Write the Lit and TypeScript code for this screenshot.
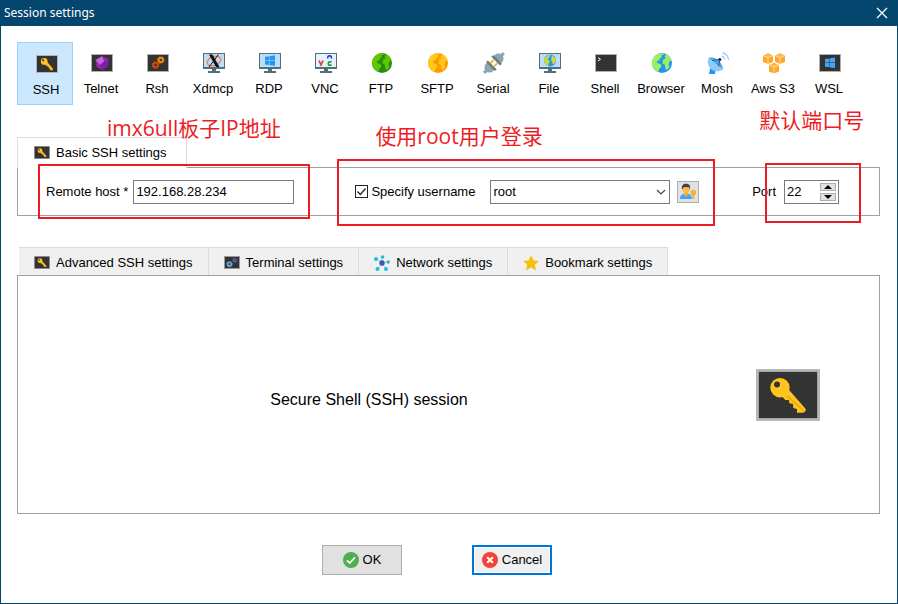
import { LitElement, html, css, svg, type TemplateResult, type SVGTemplateResult } from "lit";
import { customElement, property, state } from "lit/decorators.js";
import { classMap } from "lit/directives/class-map.js";

/* ---------- shared artwork ---------- */

const keyArt = svg`
  <path fill="#ffc41f" d="M33.3 21.3 49.7 40v2l-2.4 1.7H41V40l-3.7-1-.3-4-3.7-.7L33 31h-3.7l-3-3.3z"/>
  <path fill="none" stroke="#e2a80c" stroke-width="1.5" d="M31 27 48 42"/>
  <circle cx="24" cy="18.700" r="9.700" fill="#ffc41f"/>
  <circle cx="21" cy="15.500" r="3" fill="#333"/>`;

/* Dark console tile, 64 x 52 units */
const tile = (art: unknown) => svg`
  <rect width="64" height="52" fill="#b8b8b8"/>
  <rect x="2.500" y="2.500" width="59" height="47" fill="#8f8f8f"/>
  <rect x="3" y="3" width="58" height="46" fill="#333"/>
  ${art}`;

const smallTile = (art: unknown) => svg`
  <rect x="2" y="2" width="22" height="18" fill="#b0b0b0"/>
  <rect x="3" y="3" width="20" height="16" fill="#333"/>
  ${art}`;

const monitor = (art: unknown) => svg`
  <rect x="2" y="1" width="22" height="16" fill="#546e7a"/>
  <rect x="3" y="2" width="20" height="13" fill="#bbdefb"/>
  <path fill="#546e7a" d="M11 17h4v2h4v2H7v-2h4z"/>
  ${art}`;

const gear = (cx: number, cy: number, r: number, color: string) => svg`
  <circle cx=${cx} cy=${cy} r=${r} fill="none" stroke=${color} stroke-width=${r * 0.8}/>
  <circle cx=${cx} cy=${cy} r=${r * 1.5} fill="none" stroke=${color} stroke-width=${r * 0.5}
    stroke-dasharray="${r * 0.68} ${r * 0.5}"/>`;

const globe = (sea: string, land: string) => svg`
  <circle cx="13" cy="11" r="10" fill=${sea}/>
  <path fill=${land} d="M6 4C9 1.400 13 .8 15 1.300l-1 1.700-2 .6 1 1.600-2.500 1.300.5 1.500-2 .5-1.500 2L10 11.500l2.500 1.500-.7 2.500-1.800 1.500-.5 3C5 18 3.300 14 3.100 11 3.200 8 4 6 6 4z"/>
  <path fill=${land} d="m17 2.200 3.500 2.300L22.500 8l-2 1.500-1 3 1 2.500-2.500 3-1.500-1-.5-4-2.500-1.500.5-4 3-1.500-1.500-1.500z"/>`;

const windowsLogo = (color: string, x: number, y: number) => svg`
  <path transform="translate(${x} ${y})" fill=${color}
    d="M0 1.500 4.500 1v4H0zM5 .8 10 0v5H5zM0 5.500h4.500v4.300L0 9.300zM5 5.500h5v5L5 9.900z"/>`;

const cube = (x: number, y: number) => svg`
  <g transform="translate(${x} ${y})">
    <path fill="#ffb74d" d="m0 2.400 5-2.400 5 2.400v6.300L5 10.800 0 8.700z"/>
    <path fill="#ffa726" d="M0 3 4.700 5v5.700L0 8.700zM10 3 5.300 5v5.700L10 8.700z"/>
    <path fill="none" stroke="#fff3e0" stroke-width=".6" d="m.5 2.700 4.500 2 4.500-2M5 4.700v5.800"/>
  </g>`;

const sessionArt: Record<string, SVGTemplateResult> = {
  SSH: svg`<g transform="translate(2 2) scale(.34375 .34615)">${tile(keyArt)}</g>`,
  Telnet: smallTile(svg`
    <path fill="#9c27b0" d="m13 4.300 6.500 3-.5 6.700-5.500 4L7.500 15l-1-7z"/>
    <path fill="#c665dc" d="m13 4.300 2.200 5.200-4.200 3.500-4.500-5z"/>
    <path fill="#7b1fa2" d="m15.200 9.500 4.300-2.200-.5 6.700-5.500 4-2.500-5z"/>`),
  Rsh: smallTile(svg`${gear(10.500, 13, 2.200, "#d84a0c")}${gear(15.800, 8, 2.100, "#fb8c00")}`),
  Xdmcp: monitor(svg`
    <ellipse cx="13" cy="9" rx="7" ry="4.500" fill="none" stroke="#f0855c" stroke-width="1.500" transform="rotate(-20 13 9)"/>
    <path fill="#111" d="M8 2.500h3.500L18.500 15H15z"/>
    <path stroke="#111" stroke-width="1" d="M17.500 2.500 8 15"/>`),
  RDP: monitor(windowsLogo("#2196f3", 8, 3.300)),
  VNC: monitor(svg`
    <rect x="3" y="2" width="20" height="13" fill="#e3f2fd"/>
    <path fill="none" stroke="#e53935" stroke-width="1.700" d="m6 8.500 2 4.500 2-4.500"/>
    <path fill="none" stroke="#2020e0" stroke-width="1.400" d="M14.800 6.500V5c0-1.600 3.600-1.600 3.600 0v1.500"/>
    <path fill="none" stroke="#1fa32a" stroke-width="1.700" d="M18.500 9.800h-2.200q-1 0-1 1.700t1 1.700h2.200"/>`),
  FTP: globe("#2a8a12", "#5fc800"),
  SFTP: globe("#ff9800", "#ffc91a"),
  Serial: svg`
    <g transform="rotate(-45 13 11)">
      <path stroke="#90a4ae" stroke-width="3" d="M-1 11h5M22 11h5"/>
      <path fill="#90a4ae" d="M2 8.500 5 6h4.500v10H5l-3-2.500zM24 8.500 21 6h-4.500v10H21l3-2.500z"/>
      <path fill="#607d8b" d="M8 4.800h2.500v12.400H8zM15.500 4.800H18v12.400h-2.500z"/>
      <path stroke="#ffb300" stroke-width="1.800" d="M10.500 8.500h4.500M11 13.500h4.500"/>
    </g>`,
  File: monitor(svg`
    <circle cx="13" cy="8.600" r="6" fill="#2196f3"/>
    <path fill="#cddc39" d="M8 5.500 12 2.700l1.500.6-1.500 2-1.500 2 2.500 2-1.500 2.500-.5 2.500C8 13 7.200 10 7.100 8z"/>
    <path fill="#cddc39" d="m15 3.500 3 2 1 3-1.500 3-1.500 1-1-3-1-1.500z"/>`),
  Shell: smallTile(svg`<path fill="none" stroke="#fff" stroke-width="1" d="m5 5.500 2.500 1.800L5 9"/>`),
  Browser: globe("#2196f3", "#9cf05a"),
  Mosh: svg`
    <path fill="#2196f3" d="m5.500 14.500 5 3.500-.5 4H4z"/>
    <path fill="#90caf9" d="M3.500 6C1.500 11 4 17.500 9.500 19c3 .8 6.500 0 8.500-1.500z"/>
    <path fill="#42a5f5" d="M3.500 6 18 17.500C18 15 16 10 12 7.500 9 5.500 6 5 3.500 6z"/>
    <path fill="none" stroke="#455a64" stroke-width="1" d="m7 8.500 8-1-1.500 7"/>
    <circle cx="14.800" cy="7.500" r="1.600" fill="#1a237e"/>
    <path fill="none" stroke="#90caf9" stroke-width="1.200" d="M16.500 4c1.700.3 3 1.700 3.200 3.500M17.500.8c3.300.6 5.600 3.200 6 7"/>`,
  "Aws S3": svg`${cube(2, 1)}${cube(14, 1)}${cube(8, 10.500)}`,
  WSL: smallTile(windowsLogo("#42a5f5", 8, 5.500)),
};

const tabArt: Record<string, SVGTemplateResult> = {
  key: svg`<g transform="translate(0 1) scale(.25)">${tile(keyArt)}</g>`,
  gears: svg`
    <rect y="1" width="16" height="13" fill="#999"/><rect x="1" y="2" width="14" height="11" fill="#333"/>
    ${gear(5.500, 9.200, 1.800, "#64b5f6")}${gear(10.800, 5.200, 1.400, "#5c6bc0")}`,
  network: svg`
    <path stroke="#90caf9" stroke-width=".8" d="M8 8 2 4M8 8V2M8 8l6-1M8 8l4 6M8 8l-4 6"/>
    <circle cx="8" cy="8" r="2.700" fill="#3f51b5"/>
    <g fill="#1fbcd8"><circle cx="2" cy="4" r="2"/><circle cx="8.500" cy="2" r="1.800"/><circle cx="14.200" cy="7" r="1.800"/>
    <circle cx="12" cy="14" r="2"/><circle cx="3.500" cy="14" r="2"/></g>`,
  star: svg`<path fill="#f4c20d" d="m8 0 2.400 5.400 5.600.6-4.200 3.800L13 15.500 8 12.600l-5 2.900 1.200-5.700L0 6l5.600-.6z"/>`,
};

const tabIcon = (name: string) =>
  html`<svg class="tab-icon" viewBox="0 0 16 16" aria-hidden="true">${tabArt[name]}</svg>`;

/* ---------- session type button ---------- */

@customElement("session-type")
class SessionType extends LitElement {
  @property() label = "";
  @property({ type: Boolean }) selected = false;

  static styles = css`
    :host { display: block; flex: 0 0 56px; }
    .type {
      display: flex; flex-direction: column; align-items: center; gap: 7px;
      width: 100%; height: 63px; padding: 9px 0 0; box-sizing: border-box;
      border: 1px solid transparent; background: none;
      font: 13px/16px "Liberation Sans", sans-serif; color: #000; white-space: nowrap;
    }
    .selected { background: #cce8ff; border-color: #99d1ff; padding: 10px 0 0 2px; }
    .icon { width: 24px; height: 22px; flex: none; overflow: visible; }
  `;

  render() {
    return html`
      <button class=${classMap({ type: true, selected: this.selected })} aria-pressed=${this.selected}>
        <svg class="icon" viewBox="0 0 24 22" aria-hidden="true">${sessionArt[this.label]}</svg>
        <span>${this.label}</span>
      </button>`;
  }
}

/* ---------- settings window ---------- */

@customElement("app-root")
class AppRoot extends LitElement {
  @state() private current = "SSH";
  @state() private port = 22;

  static styles = css`
    :host {
      display: flex; flex-direction: column; min-height: 100vh; box-sizing: border-box;
      border: 1px solid #04466e; border-top: 0; background: #fff; color: #000;
      font: 13px/16px "Liberation Sans", sans-serif;
    }
    button, input, select { font: inherit; color: inherit; margin: 0; border-radius: 0; }

    .titlebar {
      display: flex; align-items: center; justify-content: space-between;
      height: 26px; padding: 0 7px 0 3px; background: #04466e; color: #fff;
    }
    .title { margin: 0; font: 12px/16px "Noto Sans", "Open Sans", sans-serif; }
    .close { display: flex; padding: 2px; border: 0; background: none; }
    .close svg { width: 12px; height: 12px; }

    .content { display: flex; flex-direction: column; flex: 1; padding: 16px 17px 28px 16px; }
    .types { display: flex; }

    .basic { margin-top: 32px; }
    .tab {
      display: flex; align-items: center; gap: 6px; box-sizing: border-box;
      border: 0; background: none; white-space: nowrap;
    }
    .tab-icon { width: 16px; height: 16px; flex: none; }
    .basic-tab {
      position: relative; width: fit-content; height: 31px; margin-bottom: -1px; padding: 0 19px 0 16px;
      border: 1px solid #dcdcdc; border-bottom: 0; background: #fff;
    }
    .basic-panel {
      display: flex; align-items: center; height: 49px; box-sizing: border-box;
      padding: 0 40px 0 28px; border: 1px solid #a0a0a0;
    }

    .field { position: relative; display: flex; align-items: center; height: 24px; }
    .user { margin-left: 61px; }
    .port { margin-left: auto; }
    .box { height: 24px; box-sizing: border-box; border: 1px solid #7a7a7a; background: #fff; outline: 0; }
    .host-input { width: 161px; margin-left: 5px; padding: 0 2px; }
    .check { position: relative; display: flex; margin-right: 3px; }
    .check input { appearance: none; width: 13px; height: 13px; border: 1px solid #222; background: #fff; }
    .check svg { position: absolute; inset: 0; width: 13px; height: 13px; pointer-events: none; }
    .combo { position: relative; display: flex; width: 180px; margin-left: 15px; }
    .combo select { appearance: none; width: 100%; padding: 0 20px 0 2px; }
    .combo svg { position: absolute; right: 4px; top: 8px; width: 10px; height: 8px; pointer-events: none; }
    .user-button {
      display: flex; align-items: center; justify-content: center; width: 22px; height: 22px;
      margin-left: 7px; padding: 0; border: 1px solid #adadad; background: #e1e1e1;
    }
    .user-button svg { width: 18px; height: 18px; flex: none; }
    .spin { display: flex; align-items: center; width: 55px; margin-left: 8px; padding-right: 2px; }
    .spin input {
      flex: 1; min-width: 0; padding: 0 2px; border: 0; background: none; outline: 0; appearance: textfield;
    }
    .spin input::-webkit-inner-spin-button { appearance: none; margin: 0; }
    .arrows { display: flex; flex-direction: column; gap: 2px; }
    .arrow {
      display: flex; align-items: center; justify-content: center; width: 16px; height: 8px;
      box-sizing: border-box; padding: 0; border: 1px solid #adadad; background: #e1e1e1;
    }
    .arrow svg { width: 8px; height: 4px; flex: none; }

    /* Red callouts laid over the fields they explain */
    .mark { position: absolute; border: 2px solid #ed1c24; pointer-events: none; }
    .mark-host { inset: -16px -16px -15px -8px; }
    .mark-user { inset: -21px -16px -22px -18px; }
    .mark-port { inset: -17px -22px -19px 13px; }
    .note {
      position: absolute; bottom: 100%; white-space: nowrap; color: #ed1c24; pointer-events: none;
      font: 21px/28px "Open Sans", "Noto Sans CJK SC", sans-serif;
    }
    .note-host { left: 61px; margin-bottom: 38px; }
    .note-user { left: 20px; margin-bottom: 30px; }
    .note-port { left: 7px; margin-bottom: 46px; }

    .tabs { display: flex; margin-top: 31px; padding-left: 2px; }
    .tabs .tab {
      height: 28px; padding: 2px 15px 0; background: #f0f0f0;
      border-top: 1px solid #dcdcdc; border-right: 1px solid #dcdcdc;
    }
    .summary {
      display: flex; align-items: center; flex: 1; min-height: 120px; box-sizing: border-box;
      padding: 0 59px 0 0; border: 1px solid #a0a0a0;
    }
    .summary-text { flex: 1; margin: 0 36px 0 0; padding-top: 10px; text-align: center; font-size: 16px; line-height: 20px; }
    .summary-icon { width: 64px; height: 52px; flex: none; }

    .actions { display: flex; justify-content: center; gap: 70px; margin-top: 31px; padding-right: 23px; }
    .action {
      display: flex; align-items: center; justify-content: center; gap: 4px; width: 80px; height: 30px;
      box-sizing: border-box; padding: 0; border: 1px solid #adadad; background: #e1e1e1;
    }
    .default { border: 2px solid #0078d7; background: #f0f0f0; box-shadow: inset 0 0 0 1px #fff; }
    .action svg { width: 16px; height: 16px; flex: none; }
  `;

  private readonly types = ["SSH", "Telnet", "Rsh", "Xdmcp", "RDP", "VNC", "FTP", "SFTP", "Serial", "File",
    "Shell", "Browser", "Mosh", "Aws S3", "WSL"];

  private readonly tabs = [
    { icon: "key", label: "Advanced SSH settings" },
    { icon: "gears", label: "Terminal settings" },
    { icon: "network", label: "Network settings" },
    { icon: "star", label: "Bookmark settings" },
  ];

  private renderHost(): TemplateResult {
    return html`
      <div class="field">
        <label for="host">Remote host *</label>
        <input id="host" class="box host-input" type="text" value="192.168.28.234" />
        <span class="mark mark-host"></span>
        <span class="note note-host">imx6ull板子IP地址</span>
      </div>`;
  }

  private renderUser(): TemplateResult {
    return html`
      <div class="field user">
        <span class="check">
          <input id="specify" type="checkbox" checked />
          <svg viewBox="0 0 13 13"><path d="m2.500 6.500 2.800 3 5.200-6" fill="none" stroke="#222" stroke-width="1.300"/></svg>
        </span>
        <label for="specify">Specify username</label>
        <span class="combo">
          <select class="box" aria-label="Username"><option>root</option></select>
          <svg viewBox="0 0 10 8"><path d="m1 2 4 4 4-4" fill="none" stroke="#444" stroke-width="1.200"/></svg>
        </span>
        <button class="user-button" aria-label="Manage users">
          <svg viewBox="0 0 18 18">
            <path fill="#42a5f5" d="M1 16c0-4 2-5 5-5.500h2C11 11 13 12 13 16z"/>
            <path fill="#ffa726" d="M5 9h4v3l-2 1.500L5 12z"/>
            <ellipse cx="7" cy="6" rx="3.600" ry="4.300" fill="#ffb74d"/>
            <path fill="#424242" d="M3 6.500C2.500 2.500 4 .8 7 .8s4.800 1.700 4 5.700L10 4.300 5 4z"/>
            <circle cx="14.300" cy="9.500" r="2.700" fill="#f9a825"/>
            <circle cx="14.300" cy="9" r=".8" fill="#e1e1e1"/>
            <path fill="#f9a825" d="M13.500 11.500h1.800V16h-1.800z"/>
          </svg>
        </button>
        <span class="mark mark-user"></span>
        <span class="note note-user">使用root用户登录</span>
      </div>`;
  }

  private renderPort(): TemplateResult {
    return html`
      <div class="field port">
        <label for="port">Port</label>
        <span class="box spin">
          <input id="port" type="number" .value=${String(this.port)} />
          <span class="arrows">
            <button class="arrow" aria-label="Increase port" @click=${() => this.port++}>
              <svg viewBox="0 0 8 4"><path d="M4 0 8 4H0z"/></svg>
            </button>
            <button class="arrow" aria-label="Decrease port" @click=${() => this.port--}>
              <svg viewBox="0 0 8 4"><path d="M0 0h8L4 4z"/></svg>
            </button>
          </span>
        </span>
        <span class="mark mark-port"></span>
        <span class="note note-port">默认端口号</span>
      </div>`;
  }

  render() {
    return html`
      <header class="titlebar">
        <h1 class="title">Session settings</h1>
        <button class="close" aria-label="Close">
          <svg viewBox="0 0 12 12"><path d="m1 1 10 10M11 1 1 11" stroke="#fff" stroke-width="1.300"/></svg>
        </button>
      </header>
      <main class="content">
        <nav class="types">
          ${this.types.map((t) => html`
            <session-type .label=${t} .selected=${t === this.current} @click=${() => (this.current = t)}></session-type>`)}
        </nav>
        <section class="basic">
          <button class="tab basic-tab">${tabIcon("key")}Basic SSH settings</button>
          <div class="basic-panel">${this.renderHost()}${this.renderUser()}${this.renderPort()}</div>
        </section>
        <div class="tabs">
          ${this.tabs.map((t) => html`<button class="tab">${tabIcon(t.icon)}${t.label}</button>`)}
        </div>
        <section class="summary">
          <p class="summary-text">Secure Shell (SSH) session</p>
          <svg class="summary-icon" viewBox="0 0 64 52" aria-hidden="true">${tile(keyArt)}</svg>
        </section>
        <footer class="actions">
          <button class="action">
            <svg viewBox="0 0 16 16"><circle cx="8" cy="8" r="8" fill="#4caf50"/>
              <path d="m4 8.300 2.700 2.700L12 5.300" fill="none" stroke="#fff" stroke-width="1.700"/></svg>
            OK
          </button>
          <button class="action default">
            <svg viewBox="0 0 16 16"><circle cx="8" cy="8" r="8" fill="#f44336"/>
              <path d="m5.200 5.200 5.600 5.600M10.800 5.200l-5.600 5.600" stroke="#fff" stroke-width="2"/></svg>
            Cancel
          </button>
        </footer>
      </main>`;
  }
}
